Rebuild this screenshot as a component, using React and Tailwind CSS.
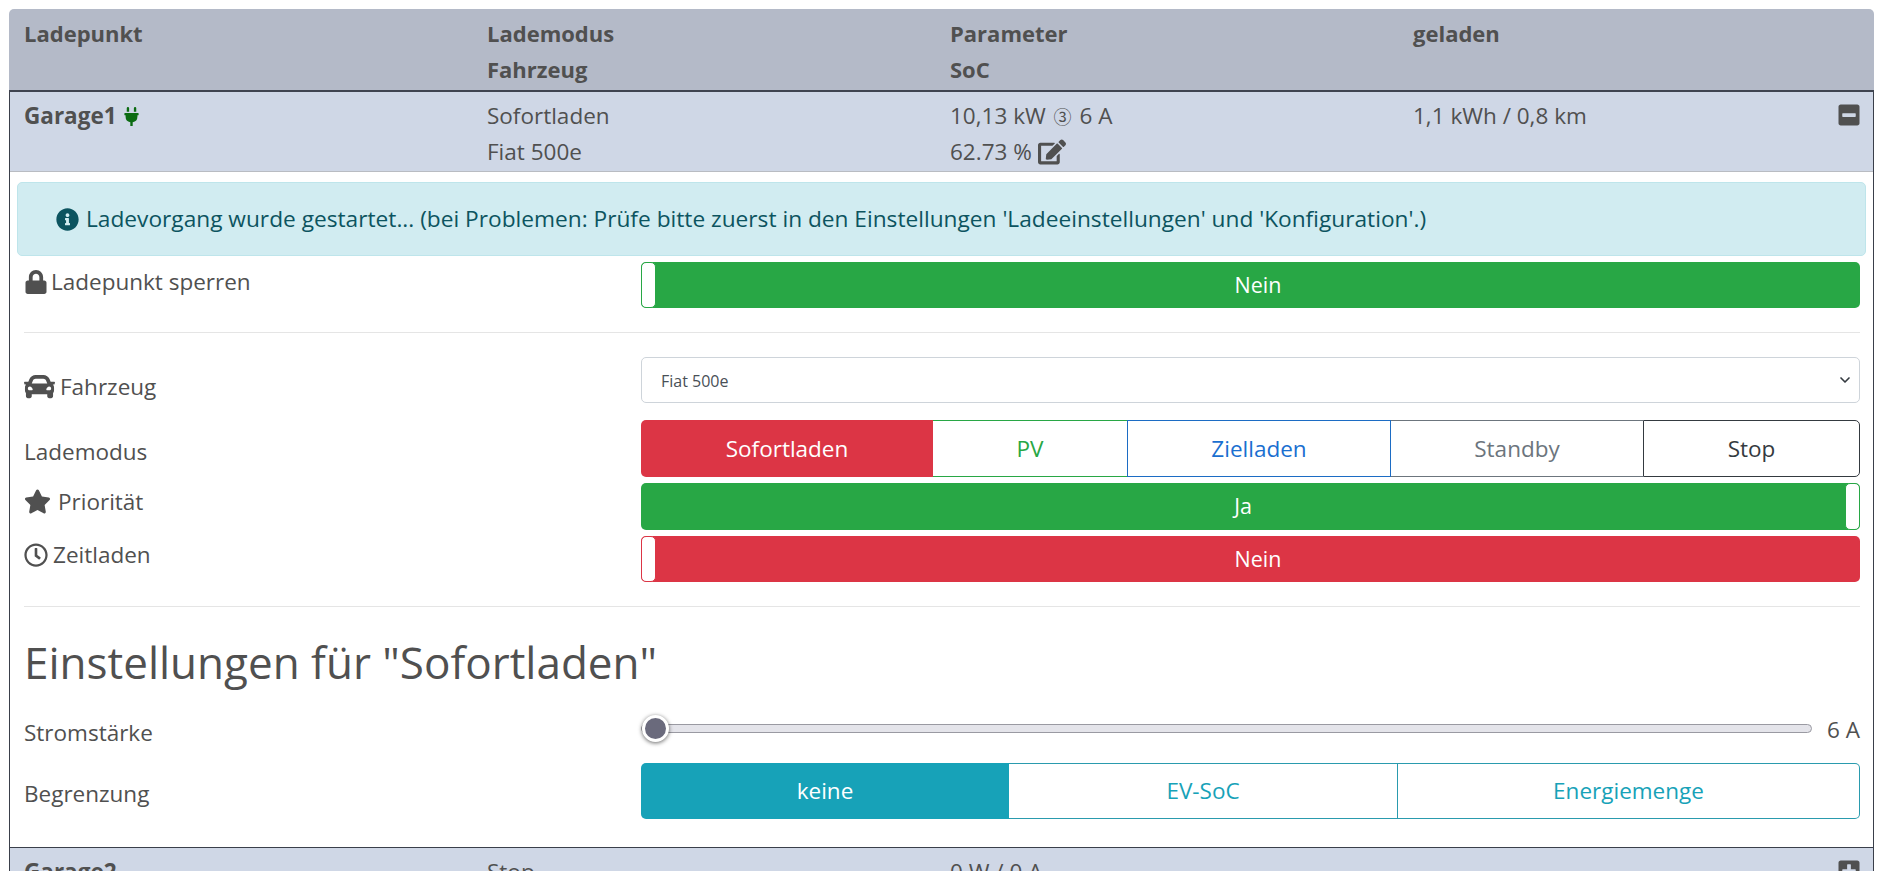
import React from 'react';
import { FaPlug, FaMinusSquare, FaPlusSquare, FaEdit, FaInfoCircle, FaLock, FaCar, FaStar, FaRegClock } from 'react-icons/fa';
import { ChevronDown } from 'lucide-react';
import clsx from 'clsx';

const Toggle = ({ label, color, on }) => (
    <div
        className={clsx(
            'relative flex items-center justify-center h-full rounded-[5px] text-white text-[21.5px]',
            color === 'green' ? 'bg-[#28a745]' : 'bg-[#dc3545]',
            on ? 'pr-[15px]' : 'pl-[15px]'
        )}
    >
        {label}
        <span
            className={clsx(
                'absolute top-0 bottom-0 w-[15px] bg-white border rounded-[5px]',
                color === 'green' ? 'border-[#28a745]' : 'border-[#dc3545]',
                on ? 'right-0' : 'left-0'
            )}
        />
    </div>
);

const Label = ({ icon: Icon, iconClass, children, className }) => (
    <div className={clsx('w-[617px] shrink-0 flex items-center leading-[36px]', className)}>
        {Icon && <Icon className={iconClass} />}
        {children}
    </div>
);

const SummaryRow = ({ name, mode, power, loaded, extra, charging, expanded }) => (
    <div className="relative bg-[#cfd7e6] grid grid-cols-[463px_463px_463px_1fr] pl-[14px] h-[80px] pt-[6px] leading-[36px] border-b border-[#b9bcc2]">
        <div className="font-bold flex items-center self-start">
            {name}
            {charging && <FaPlug className="ml-[5px] text-[#0b6b12] text-[19px]" />}
        </div>
        <div>
            <div>{mode}</div>
            <div>{extra?.vehicle}</div>
        </div>
        <div>
            <div>{power}</div>
            {extra && (
                <div className="flex items-center h-[36px]">
                    {extra.soc}
                    <FaEdit className="ml-[6px] text-[28px]" />
                </div>
            )}
        </div>
        <div>{loaded}</div>
        <span className="absolute right-[12px] top-[11px]">
            {expanded ? <FaMinusSquare className="text-[24px]" /> : <FaPlusSquare className="text-[24px]" />}
        </span>
    </div>
);

const App = () => {
    return (
        <div className="h-[871px] overflow-hidden bg-white pt-[9px] pl-[9px] pr-[19px] text-[#505050] text-[22.5px] font-['Open_Sans','Noto_Sans',sans-serif]">
            <div className="bg-[#b4bac8] rounded-t-[5px] grid grid-cols-[463px_463px_463px_1fr] pl-[15px] h-[83px] pt-[6px] leading-[36px] font-bold text-[22px] border-b-2 border-[#3f4450]">
                <div>Ladepunkt</div>
                <div>
                    <div>Lademodus</div>
                    <div>Fahrzeug</div>
                </div>
                <div>
                    <div>Parameter</div>
                    <div>SoC</div>
                </div>
                <div>geladen</div>
            </div>

            <div className="border-x border-[#3a3f4a]">
                <SummaryRow
                    name="Garage1"
                    mode="Sofortladen"
                    power={<span>10,13 kW <span className="font-['Noto_Sans_CJK_SC'] text-[18px] mx-[2px]">③</span> 6 A</span>}
                    loaded="1,1 kWh / 0,8 km"
                    extra={{ vehicle: 'Fiat 500e', soc: '62.73 %' }}
                    charging
                    expanded
                />

                <div className="pl-[14px] pr-[13px] pb-[28px] border-b border-[#3a3f4a]">
                    <div className="-ml-[7px] -mr-[6px] mt-[10px] h-[74px] rounded-[5px] bg-[#d1ecf1] border border-[#bee5eb] text-[#0c5460] text-[22.7px] flex items-center pl-[38px]">
                        <FaInfoCircle className="text-[23px] mr-[7px]" />
                        Ladevorgang wurde gestartet... (bei Problemen: Prüfe bitte zuerst in den Einstellungen 'Ladeeinstellungen' und 'Konfiguration'.)
                    </div>

                    <div className="flex mt-[6px]">
                        <Label icon={FaLock} iconClass="text-[24px] mr-[3px]" className="items-start pt-[2px] [&>svg]:mt-[6px]">
                            Ladepunkt sperren
                        </Label>
                        <div className="flex-1 h-[46px]">
                            <Toggle label="Nein" color="green" />
                        </div>
                    </div>

                    <hr className="mt-[24px] border-[#e5e5e5]" />

                    <div className="flex mt-[24px]">
                        <Label icon={FaCar} iconClass="text-[31px] mr-[5px]" className="pt-[13px] h-[46px]">
                            Fahrzeug
                        </Label>
                        <div className="relative flex-1">
                            <select className="block w-full h-[46px] appearance-none rounded-[5px] border border-[#ced4da] bg-white pl-[19px] pt-[2px] text-[16px] text-[#495057]">
                                <option>Fiat 500e</option>
                            </select>
                            <ChevronDown className="absolute right-[7px] top-[15px] w-[16px] h-[16px] text-[#343a40]" strokeWidth={2.5} />
                        </div>
                    </div>

                    <div className="flex mt-[17px]">
                        <Label className="pt-[6px] h-[57px]">Lademodus</Label>
                        <div className="flex-1 flex h-[57px]">
                            <div className="w-[292px] flex items-center justify-center bg-[#dc3545] text-white rounded-l-[5px]">Sofortladen</div>
                            <div className="w-[195px] flex items-center justify-center bg-white text-[#28a745] border-y border-r border-[#28a745]">PV</div>
                            <div className="w-[264px] flex items-center justify-center bg-white text-[#1a6fd0] border-y border-x border-[#1c6cc4] -ml-px">Zielladen</div>
                            <div className="w-[252px] flex items-center justify-center bg-white text-[#6c757d] border-y border-[#6c757d]">Standby</div>
                            <div className="flex-1 flex items-center justify-center bg-white text-[#343a40] border border-[#343a40] rounded-r-[5px]">Stop</div>
                        </div>
                    </div>

                    <div className="flex mt-[6px]">
                        <Label icon={FaStar} iconClass="text-[27px] mr-[7px]" className="h-[47px] pb-[10px]">
                            Priorität
                        </Label>
                        <div className="flex-1 h-[47px]">
                            <Toggle label="Ja" color="green" on />
                        </div>
                    </div>

                    <div className="flex mt-[6px]">
                        <Label icon={FaRegClock} iconClass="text-[24px] mr-[5px]" className="h-[46px] pb-[8px]">
                            Zeitladen
                        </Label>
                        <div className="flex-1 h-[46px]">
                            <Toggle label="Nein" color="red" />
                        </div>
                    </div>

                    <hr className="mt-[24px] border-[#e5e5e5]" />

                    <h3 className="mt-[27px] h-[56px] leading-[56px] text-[44px] font-normal">Einstellungen für "Sofortladen"</h3>

                    <div className="flex mt-[25px]">
                        <Label>Stromstärke</Label>
                        <div className="flex-1 flex items-center h-[30px]">
                            <div className="relative flex-1 h-[9px] -mt-[4px] mr-[15px] rounded-full bg-[#e4e4ea] border border-[#9a9aa2]">
                                <span className="absolute left-0 top-[-10px] w-[27px] h-[27px] rounded-full bg-[#6a6a7c] border-[3px] border-white shadow-[0_1px_4px_rgba(0,0,0,0.6)]" />
                            </div>
                            <span>6 A</span>
                        </div>
                    </div>

                    <div className="flex mt-[12px]">
                        <Label className="pt-[5px] h-[56px]">Begrenzung</Label>
                        <div className="flex-1 flex h-[56px]">
                            <div className="w-[368px] flex items-center justify-center bg-[#17a2b8] text-white rounded-l-[5px]">keine</div>
                            <div className="w-[389px] flex items-center justify-center bg-white text-[#17a2b8] border-y border-r border-[#2a9bae]">EV-SoC</div>
                            <div className="flex-1 flex items-center justify-center bg-white text-[#17a2b8] border-y border-r border-[#2a9bae] rounded-r-[5px]">Energiemenge</div>
                        </div>
                    </div>
                </div>

                <SummaryRow name="Garage2" mode="Stop" power="0 W / 0 A" />
            </div>
        </div>
    );
};

export default App;
